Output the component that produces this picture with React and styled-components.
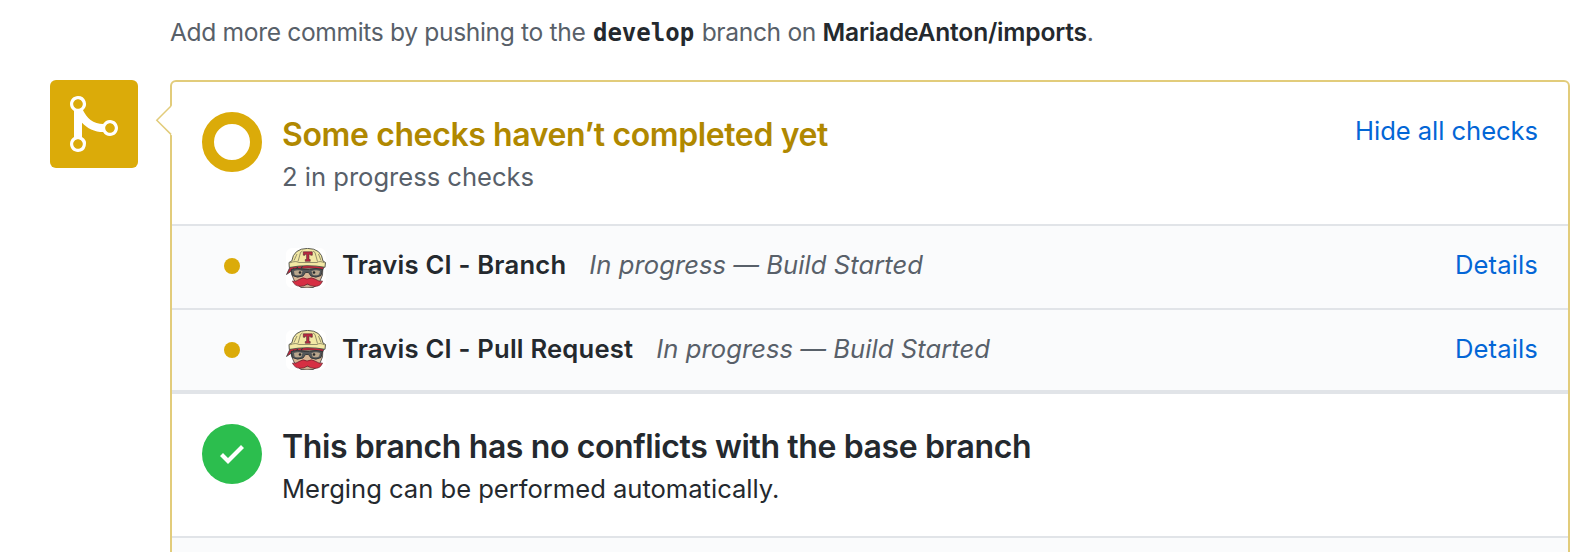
import React from "react";
import styled, { createGlobalStyle } from "styled-components";

const GlobalStyle = createGlobalStyle`
  *, *::before, *::after { box-sizing: border-box; }
  html, body { height: 100%; overflow: hidden; }
  body {
    margin: 0;
    background: #fff;
    color: #24292e;
    font-family: Inter, "Liberation Sans", sans-serif;
    font-size: 25.6px;
    letter-spacing: -0.02px;
  }
`;

const Page = styled.main`
  width: 1588px;
  height: 552px;
  padding: 13px 18px 0 50px;
  overflow: hidden;
`;

const PushHint = styled.p`
  margin: 0 0 29px 120px;
  line-height: 38px;
  font-size: 24.6px;
  letter-spacing: -0.35px;
  color: #586069;
  white-space: nowrap;
`;

const BranchName = styled.strong`
  display: inline-block;
  margin: 0 1px 0 1px;
  line-height: 1;
  font-family: "DejaVu Sans Mono", monospace;
  font-size: 24px;
  font-weight: 700;
  letter-spacing: 0;
  color: #24292e;
`;

const RepoName = styled.strong`
  font-weight: 600;
  letter-spacing: -0.2px;
  color: #24292e;
`;

const MergeArea = styled.section`
  display: flex;
  gap: 32px;
`;

const MergeBadge = styled.div`
  flex: none;
  display: flex;
  align-items: center;
  justify-content: center;
  width: 88px;
  height: 88px;
  border-radius: 6px;
  background: #dbab09;
  color: #fff;
`;

const Panel = styled.div`
  position: relative;
  flex: 1;
  height: 520px;
  border: 2px solid #e2cc7b;
  border-radius: 6px;
`;

const Caret = styled.svg`
  position: absolute;
  top: 22px;
  left: -17px;
`;

const StatusSection = styled.div`
  display: flex;
  height: 142px;
  padding: 30px 30px 0;
`;

const Ring = styled.span`
  flex: none;
  width: 60px;
  height: 60px;
  border: 12px solid #dbab09;
  border-radius: 50%;
`;

const SuccessIcon = styled.span`
  flex: none;
  display: flex;
  align-items: center;
  justify-content: center;
  width: 60px;
  height: 60px;
  border-radius: 50%;
  background: #2cbe4e;
  color: #fff;
`;

const StatusText = styled.div`
  flex: 1;
  margin-left: 20px;
`;

const Heading = styled.h3`
  margin: 0;
  line-height: 45px;
  font-size: 32px;
  font-weight: 600;
  letter-spacing: -0.39px;
  color: ${(p) => (p.$pending ? "#b08800" : "#24292e")};
`;

const Summary = styled.p`
  margin: 0;
  line-height: 40px;
  color: ${(p) => (p.$muted ? "#586069" : "#24292e")};
`;

const Link = styled.a`
  line-height: 38px;
  letter-spacing: ${(p) => (p.$wide ? "0.12px" : "-0.06px")};
  color: #0366d6;
  text-decoration: none;
`;

const CheckList = styled.div`
  border-bottom: 4px solid #e1e4e8;
`;

const CheckRow = styled.div`
  display: flex;
  align-items: flex-start;
  height: ${(p) => p.$height}px;
  padding: 20px 30px 0 52px;
  border-top: 2px solid #e1e4e8;
  background: #fafbfc;
  line-height: 38px;
`;

const Dot = styled.span`
  width: 16px;
  height: 16px;
  margin-top: 12px;
  border-radius: 50%;
  background: #dbab09;
`;

const Avatar = styled.svg`
  flex: none;
  margin: ${(p) => p.$drop}px 16px 0 46px;
  border-radius: 6px;
  background: #fff;
`;

const CheckName = styled.strong`
  font-weight: 600;
  letter-spacing: 0.22px;
`;

const CheckState = styled.em`
  flex: 1;
  margin-left: 23px;
  color: #586069;
  letter-spacing: 0.06px;
`;

const Footer = styled.div`
  height: 60px;
  border-top: 2px solid #e1e4e8;
  background: #fafbfc;
`;

function MergeIcon() {
  return (
    <svg width="48" height="64" viewBox="0 0 12 16" fill="currentColor">
      <path
        fillRule="evenodd"
        d="M10 7c-.73 0-1.38.41-1.73 1.02V8C7.22 7.98 6 7.64 5.14 6.98c-.75-.58-1.5-1.61-1.89-2.44A1.993 1.993 0 0 0 2 .99C.89.99 0 1.89 0 3a2 2 0 0 0 1 1.72v6.56c-.59.35-1 .99-1 1.72 0 1.11.89 2 2 2a1.993 1.993 0 0 0 1-3.72V7.67c.67.7 1.44 1.27 2.3 1.69.86.42 2.03.63 2.97.64v-.02c.36.61 1 1.02 1.73 1.02 1.11 0 2-.89 2-2 0-1.11-.89-2-2-2zm-6.8 6c0 .66-.55 1.2-1.2 1.2-.65 0-1.2-.55-1.2-1.2 0-.65.55-1.2 1.2-1.2.65 0 1.2.55 1.2 1.2zm0-10c0 .66-.55 1.2-1.2 1.2-.65 0-1.2-.55-1.2-1.2 0-.65.55-1.2 1.2-1.2.65 0 1.2.55 1.2 1.2zm8 6c0 .66-.55 1.2-1.2 1.2-.65 0-1.2-.55-1.2-1.2 0-.65.55-1.2 1.2-1.2.65 0 1.2.55 1.2 1.2z"
      />
    </svg>
  );
}

function CheckIcon() {
  return (
    <svg width="24" height="32" viewBox="0 0 12 16" fill="currentColor">
      <path d="M12 5l-8 8-4-4 1.5-1.5L4 10l6.5-6.5z" />
    </svg>
  );
}

function TravisAvatar({ drop }) {
  return (
    <Avatar $drop={drop} width="40" height="40" viewBox="0 0 40 40">
      {/* face */}
      <path d="M5 17H37L36.5 27L34 33L29 38.5Q22 41 14 38.5L8 32L5.5 26Z" fill="#d8b795" stroke="#3b3d40" strokeWidth="0.8" />
      {/* bandana */}
      <path d="M4.5 18Q21 15.500 38 18L37 21.500Q22 18.500 7 22L0.500 26.500Z" fill="#c7253c" stroke="#3b3d40" strokeWidth="0.8" />
      <path d="M5 24l3-3.500M10 21.500l2-3M15 20.500l2-3" stroke="#35363a" strokeWidth="1.200" />
      {/* glasses */}
      <path d="M5 21.500Q11 19.500 18 21.500H23.500Q30 19.500 36.500 21.500L35 27.500Q30 30.500 25 28L22.500 24.500H19.500L17 28Q11 30.500 6.500 27.500Z" fill="#54585a" stroke="#303336" strokeWidth="0.9" />
      <path d="M8 23Q12 21.300 16.500 23L15.500 26.500Q11.500 28.200 8.500 26.500ZM25.500 23Q30 21.300 34 23L33 26.500Q29 28.200 26.500 26.500Z" fill="#b9a68c" />
      <circle cx="14" cy="24.500" r="1.300" fill="#26292b" />
      <circle cx="28" cy="24.500" r="1.300" fill="#26292b" />
      {/* chin and moustache */}
      <path d="M12 37Q21 35 31 37L27 39.500Q21 40.600 15 39.500Z" fill="#c9ab8e" stroke="#3b3d40" strokeWidth="0.8" />
      <path d="M6.500 33Q10 34 13 31.500Q17 28.500 21 31Q26 28.500 30 31.500Q33 34 36.500 33Q34.500 39 28 38.300Q24 38 21.500 36Q18 38.500 14 38.300Q8.500 38 6.500 33Z" fill="#d62f43" stroke="#66232d" strokeWidth="0.7" />
      {/* hard hat */}
      <path d="M5.800 13Q7.500 0.500 21.500 0.400Q35.500 0.500 37 13L39.500 14.500L39 19.300Q21 16 3.300 19.500L3 14.500Z" fill="#f2e8a4" stroke="#4a4b45" strokeWidth="0.9" />
      <path d="M4 14.800Q10 12.500 12.500 14.500H31Q33.500 12.500 38.500 14.800M12 13.500L14.500 4.500L16.500 3M31.500 13.500L29 4.500L27 3M8 12.500L11 6M35 12.500L32.500 6" fill="none" stroke="#6d6a51" strokeWidth="0.7" />
      <path d="M17.300 3.800H26.300V7.200H24.600V6.300H23V11.500H24.200V13.300H19.300V11.500H20.600V6.300H19V7.200H17.300Z" fill="#bd2941" stroke="#4b2730" strokeWidth="0.600" />
    </Avatar>
  );
}

const checks = [
  { name: "Travis CI - Branch", height: 84, drop: 2 },
  { name: "Travis CI - Pull Request", height: 82, drop: 0 },
];

export default function App() {
  return (
    <>
      <GlobalStyle />
      <Page>
        <PushHint>
          Add more commits by pushing to the <BranchName>develop</BranchName> branch on{" "}
          <RepoName>MariadeAnton/imports</RepoName>.
        </PushHint>
        <MergeArea>
          <MergeBadge>
            <MergeIcon />
          </MergeBadge>
          <Panel>
            <Caret width="19" height="34" viewBox="0 0 19 34">
              <path d="M19 1.500H17L1.800 16.500L17 31.500H19Z" fill="#fff" />
              <path d="M16 2L1.800 16.200L16 30.400" fill="none" stroke="#e2cc7b" strokeWidth="1.500" />
            </Caret>
            <StatusSection>
              <Ring />
              <StatusText>
                <Heading $pending>Some checks haven’t completed yet</Heading>
                <Summary $muted>2 in progress checks</Summary>
              </StatusText>
              <Link>Hide all checks</Link>
            </StatusSection>
            <CheckList>
              {checks.map((check) => (
                <CheckRow key={check.name} $height={check.height}>
                  <Dot />
                  <TravisAvatar drop={check.drop} />
                  <CheckName>{check.name}</CheckName>
                  <CheckState>In progress — Build Started</CheckState>
                  <Link $wide>Details</Link>
                </CheckRow>
              ))}
            </CheckList>
            <StatusSection>
              <SuccessIcon>
                <CheckIcon />
              </SuccessIcon>
              <StatusText>
                <Heading>This branch has no conflicts with the base branch</Heading>
                <Summary>Merging can be performed automatically.</Summary>
              </StatusText>
            </StatusSection>
            <Footer />
          </Panel>
        </MergeArea>
      </Page>
    </>
  );
}
